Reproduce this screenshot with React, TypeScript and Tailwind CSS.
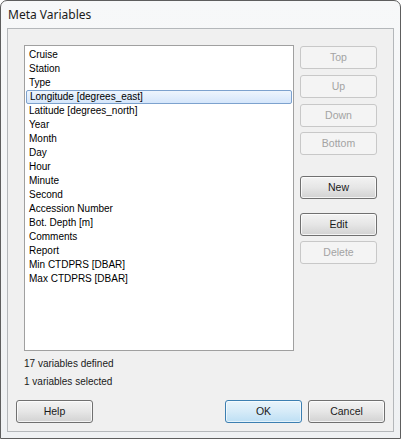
import React from "react";

const items = [
  "Cruise",
  "Station",
  "Type",
  "Longitude [degrees_east]",
  "Latitude [degrees_north]",
  "Year",
  "Month",
  "Day",
  "Hour",
  "Minute",
  "Second",
  "Accession Number",
  "Bot. Depth [m]",
  "Comments",
  "Report",
  "Min CTDPRS [DBAR]",
  "Max CTDPRS [DBAR]",
];

type BtnKind = "normal" | "disabled" | "default";

function Btn({ label, kind = "normal", className = "" }: { label: string; kind?: BtnKind; className?: string }) {
  const base =
    "w-[77px] h-[23px] rounded-[3px] flex items-center justify-center text-[10.5px] leading-none border";
  const styles: Record<BtnKind, string> = {
    normal:
      "border-[#707070] bg-gradient-to-b from-[#f3f3f3] via-[#e6e6e6] to-[#d2d2d2] text-[#1a1a1a] shadow-[inset_0_0_0_1px_rgba(255,255,255,0.75)]",
    disabled: "border-[#c8c8c8] bg-[#f4f4f4] text-[#a3a3a3]",
    default:
      "border-[#3c7fb1] bg-gradient-to-b from-[#e8f4fb] via-[#d6ebf8] to-[#bddff4] text-[#1a1a1a] shadow-[inset_0_0_0_1px_rgba(255,255,255,0.6)]",
  };
  return <div className={`${base} ${styles[kind]} ${className}`}>{label}</div>;
}

export default function App() {
  return (
    <div
      className="w-[401px] h-[439px] border border-[#5e5e5e] rounded-t-[7px] bg-gradient-to-b from-[#f7f8f9] to-[#eff1f3] flex flex-col overflow-hidden"
      style={{ fontFamily: '"Liberation Sans", Arial, sans-serif' }}
    >
      <div
        className="h-[27px] px-[7px] flex items-center text-[12px] text-[#1b1b1b]"
        style={{ fontFamily: '"Noto Sans", "Open Sans", sans-serif' }}
      >
        Meta Variables
      </div>
      <div className="mx-[6px] h-[404px] border border-[#b4b7ba] bg-[#f0f0f0] flex flex-col pt-[16px] pl-[16px]">
        <div className="flex">
          <div className="w-[270px] h-[306px] border border-[#a0a0a0] bg-white pt-[2px] px-[1px]">
            {items.map((it, i) => (
              <div
                key={it}
                className={`h-[14px] flex items-center pl-[3px] text-[10px] leading-none text-black ${
                  i === 3
                    ? "border border-[#7da2ce] rounded-[2px] bg-gradient-to-b from-[#eef5fd] to-[#d5e6fb] pl-[2px]"
                    : ""
                }`}
              >
                {it}
              </div>
            ))}
          </div>
          <div className="ml-[6px] pt-[1px] flex flex-col">
            <Btn label="Top" kind="disabled" />
            <Btn label="Up" kind="disabled" className="mt-[6px]" />
            <Btn label="Down" kind="disabled" className="mt-[6px]" />
            <Btn label="Bottom" kind="disabled" className="mt-[5px]" />
            <Btn label="New" className="mt-[21px]" />
            <Btn label="Edit" className="mt-[14px]" />
            <Btn label="Delete" kind="disabled" className="mt-[5px]" />
          </div>
        </div>
        <div className="mt-[3px] h-[18px] flex items-center text-[10px] text-[#1a1a1a]">17 variables defined</div>
        <div className="h-[18px] flex items-center text-[10px] text-[#1a1a1a]">1 variables selected</div>
        <div className="mt-[10px] flex -ml-[8px]">
          <Btn label="Help" />
          <Btn label="OK" kind="default" className="ml-[132px]" />
          <Btn label="Cancel" className="ml-[6px]" />
        </div>
      </div>
    </div>
  );
}
